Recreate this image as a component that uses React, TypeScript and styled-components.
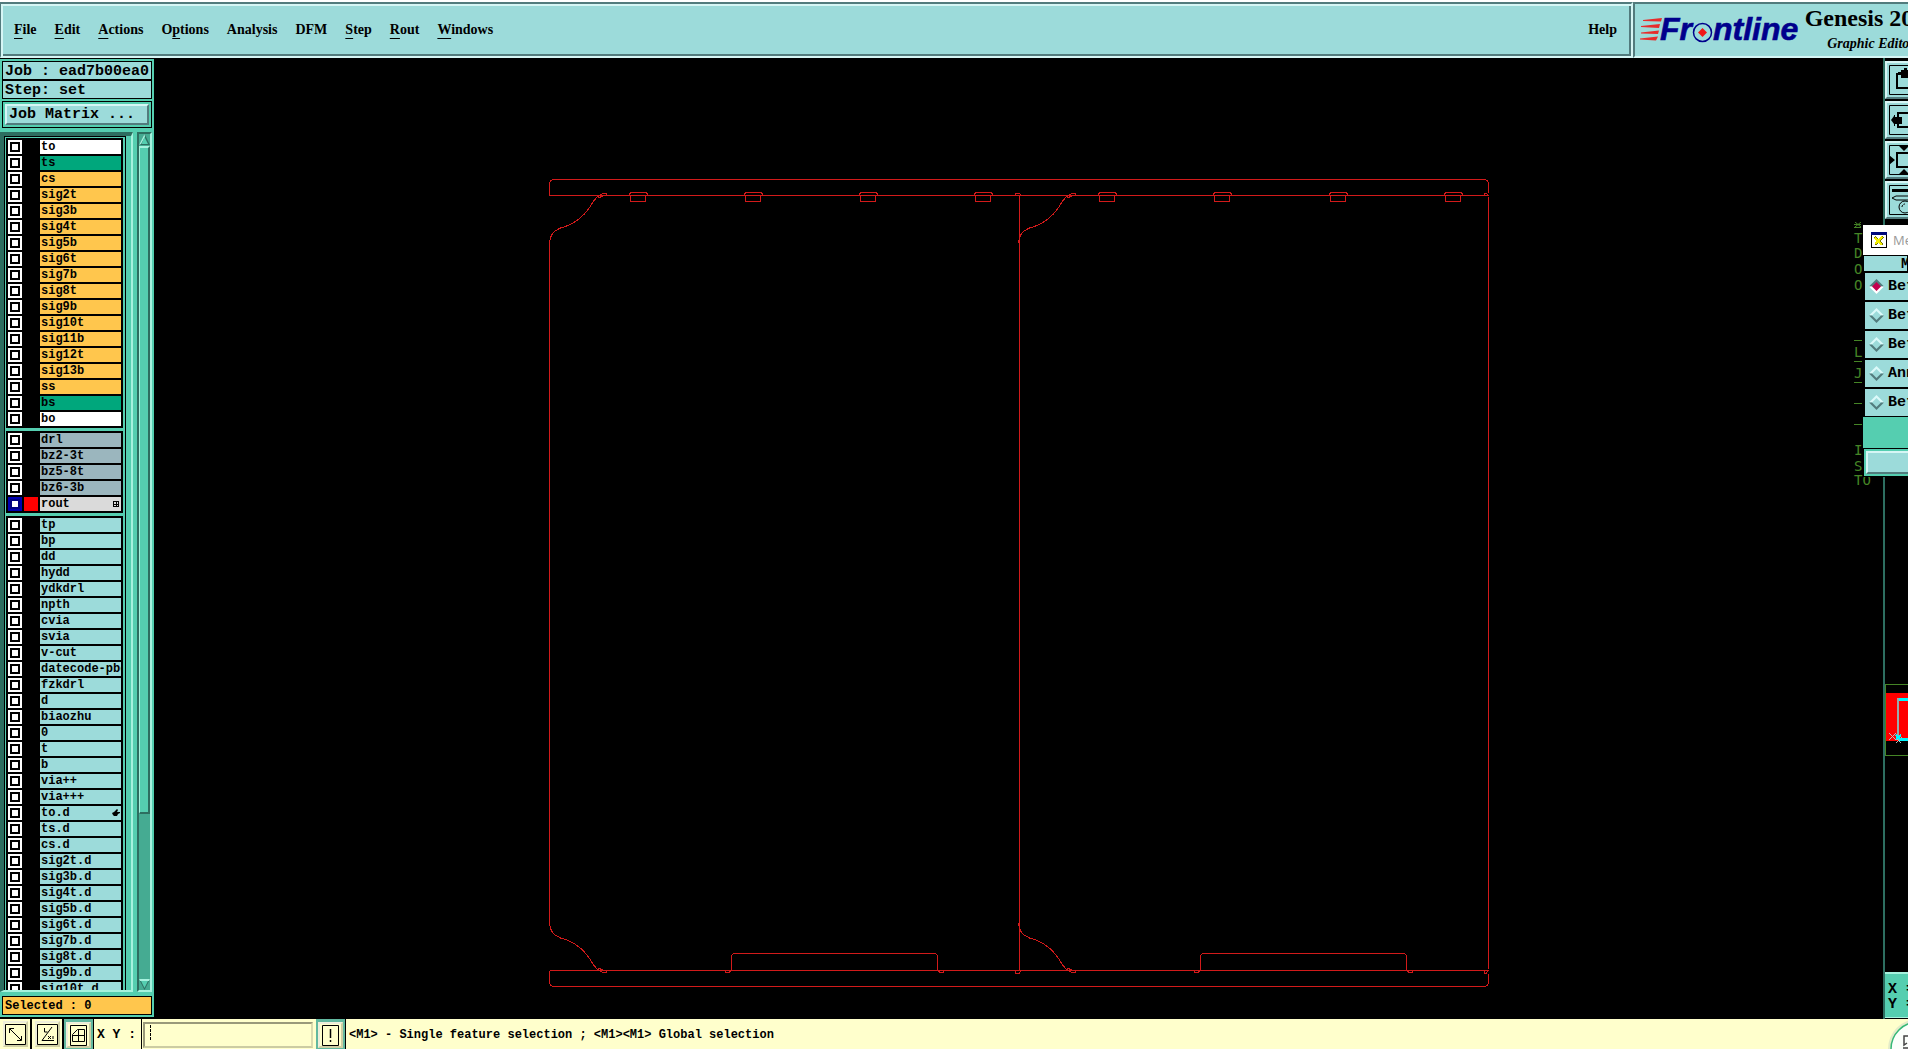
import React from "react";
import styled, { createGlobalStyle } from "styled-components";

const c = {
  face: "#9cdbda",
  faceLight: "#d6f6f5",
  faceDark: "#527b7d",
  sea: "#55ceb0",
  seaLight: "#a6f2de",
  seaDark: "#2d6e60",
  trough: "#45ab92",
  amber: "#ffc64d",
  cream: "#ffffcc",
  creamDark: "#99997a",
  board: "#d21a1a",
  silk: "#458526",
};

const mono = `"Liberation Mono", "Courier New", monospace`;
const serif = `"Liberation Serif", "Times New Roman", serif`;

const GlobalStyle = createGlobalStyle`
  * { box-sizing: border-box; }
  html, body, #root { height: 100%; }
  body { margin: 0; background: #000; color: #000; overflow: hidden; font: bold 12px/14px ${mono}; }
  button, input { font: inherit; color: inherit; margin: 0; }
`;

const Page = styled.div`
  display: flex;
  flex-direction: column;
  height: 100vh;
  overflow: hidden;
`;

/* ---------- header ---------- */

const Header = styled.header`
  display: flex;
  height: 58px;
  flex: none;
  border-top: 2px solid #fff;
`;

const MenuBar = styled.nav`
  flex: 1;
  display: flex;
  align-items: center;
  gap: 18px;
  padding: 0 14px 1px 13px;
  background: ${c.face};
  border: 2px solid ${c.faceDark};
  border-left-width: 1px;
  border-right: 2px solid ${c.faceLight};
  border-bottom-color: ${c.faceLight};
  box-shadow: inset 2px 2px ${c.faceLight}, inset -2px -2px ${c.faceDark};
`;

const MenuItem = styled.button`
  padding: 0;
  border: 0;
  background: none;
  font: bold 14px/18px ${serif};
  u { text-underline-offset: 4px; text-decoration-thickness: 1px; text-decoration-skip-ink: none; }
  &:last-child { margin-left: auto; }
`;

const Brand = styled.div`
  flex: none;
  width: 275px;
  display: flex;
  overflow: hidden;
  background: ${c.face};
  border: 2px solid ${c.faceDark};
  border-right: 0;
  border-bottom-color: ${c.faceLight};
  padding-left: 4px;
`;

const Logo = styled.svg`
  flex: none;
  width: 164px;
  height: 50px;
`;

const Product = styled.div`
  flex: none;
  width: 136px;
  text-align: center;
  white-space: nowrap;
  font-family: ${serif};
`;

const ProductName = styled.div`
  font-size: 24px;
  line-height: 28px;
`;

const ProductMode = styled.div`
  font-size: 14px;
  line-height: 24px;
  font-style: italic;
`;

/* ---------- sidebar ---------- */

const Workspace = styled.div`
  position: relative;
  flex: 1;
  min-height: 0;
  display: flex;
`;

const Sidebar = styled.aside`
  flex: none;
  width: 154px;
  display: flex;
  flex-direction: column;
  background: ${c.sea};
  padding: 2px 0;
  margin: 1px 0 2px;
`;

const InfoBox = styled.div<{ $tone?: string }>`
  flex: none;
  height: 19px;
  margin: 0 2px;
  padding-left: 2px;
  border: 1px solid #000;
  background: ${(p) => p.$tone ?? c.face};
  font-size: 15px;
  line-height: 19px;
  white-space: pre;
  overflow: hidden;
`;

const Selected = styled(InfoBox)`
  font-size: 12px;
  line-height: 18px;
`;

const ButtonWell = styled.div`
  flex: none;
  margin: 2px 2px 4px;
  border: 1px solid #000;
  padding: 2px;
`;

const MatrixButton = styled.button`
  display: block;
  width: 100%;
  height: 21px;
  padding: 0 2px;
  text-align: left;
  background: ${c.face};
  border: 2px solid;
  border-color: ${c.faceLight} ${c.faceDark} ${c.faceDark} ${c.faceLight};
  font-size: 15px;
  line-height: 17px;
`;

const ListArea = styled.div`
  flex: 1;
  min-height: 0;
  display: flex;
  margin-bottom: 4px;
`;

const ListBevel = styled.div`
  flex: 1;
  display: flex;
  border: 2px solid;
  border-width: 4px 2px 2px 4px;
  border-color: ${c.seaDark} ${c.seaLight} ${c.seaLight} ${c.seaDark};
  padding-right: 5px;
`;

const ListViewport = styled.div`
  flex: 1;
  overflow: hidden;
  display: flex;
  flex-direction: column;
  gap: 3px;
  padding: 1px 2px 0 1px;
  border: 1px solid #000;
  border-bottom: 0;
`;

const LayerGroup = styled.ul`
  flex: none;
  margin: 0;
  padding: 2px 2px 0;
  list-style: none;
  background: #000;
`;

const LayerRow = styled.label`
  display: grid;
  grid-template-columns: 14px 14px 1fr;
  gap: 2px;
  height: 14px;
  margin-bottom: 2px;
`;

const LayerCheck = styled.input`
  appearance: none;
  width: 14px;
  height: 14px;
  background: #fff;
  border: 2px solid #fff;
  box-shadow: inset 0 0 0 2px #000;
  &:checked { border-color: #0000b0; box-shadow: inset 0 0 0 2px #000080; }
`;

const Swatch = styled.span<{ $on?: boolean }>`
  background: ${(p) => (p.$on ? "#f00" : "#000")};
`;

const LayerName = styled.span<{ $tone: string }>`
  display: flex;
  justify-content: space-between;
  align-items: center;
  overflow: hidden;
  white-space: nowrap;
  padding: 0 0 0 1px;
  background: ${(p) => p.$tone};
  svg { flex: none; width: 8px; height: 8px; margin-right: 1px; }
`;

const ScrollTrack = styled.div`
  flex: none;
  width: 15px;
  margin: 0 2px 0 4px;
  display: flex;
  flex-direction: column;
  background: ${c.trough};
  border: 2px solid;
  border-color: ${c.seaDark} ${c.seaLight} ${c.seaLight} ${c.seaDark};
`;

const ScrollButton = styled.button`
  flex: none;
  padding: 0;
  border: 0;
  height: 12px;
  background: none;
  &:last-child { margin-top: auto; }
  svg { display: block; width: 11px; height: 12px; }
`;

const ScrollThumb = styled.div`
  flex: 0 1 78%;
  background: ${c.sea};
  border: 2px solid;
  border-width: 2px 2px 2px 1px;
  border-color: ${c.seaLight} ${c.seaDark} ${c.seaDark} ${c.seaLight};
`;

/* ---------- canvas ---------- */

const Canvas = styled.main`
  flex: 1;
  min-width: 0;
  overflow: hidden;
  svg { display: block; width: 100%; height: 100%; }
`;

const SilkNotes = styled.svg`
  position: absolute;
  top: 164px;
  right: 31px;
  width: 24px;
  height: 264px;
`;

/* ---------- right column ---------- */

const ToolColumn = styled.aside`
  flex: none;
  width: 25px;
  display: flex;
  flex-direction: column;
  overflow: hidden;
  border-left: 2px solid ${c.seaDark};
  padding-top: 3px;
`;

const ToolButton = styled.button`
  flex: none;
  width: 40px;
  height: 38px;
  margin-bottom: 2px;
  padding: 2px;
  background: ${c.face};
  border: 2px solid;
  border-color: ${c.faceLight} ${c.faceDark} ${c.faceDark} ${c.faceLight};
  svg { display: block; width: 32px; height: 30px; }
`;

const Overview = styled.svg`
  flex: none;
  width: 60px;
  height: 72px;
  margin-top: auto;
`;

const Readout = styled.div`
  flex: none;
  height: 46px;
  margin: 216px 0 1px;
  padding: 8px 3px;
  background: ${c.sea};
  border-top: 2px solid ${c.seaLight};
  border-bottom: 1px solid ${c.seaLight};
  font-size: 15px;
  line-height: 15px;
  white-space: pre;
`;

/* ---------- popup ---------- */

const Popup = styled.section`
  position: absolute;
  top: 167px;
  right: 0;
  width: 45px;
  overflow: hidden;
  white-space: nowrap;
  background: ${c.sea};
  font-size: 15px;
`;

const PopupTitle = styled.div`
  display: flex;
  align-items: center;
  gap: 6px;
  height: 30px;
  padding-left: 8px;
  background: #fff;
  color: #999;
  font: 13px/20px "Open Sans", sans-serif;
  svg { flex: none; width: 16px; height: 16px; }
`;

const PopupHead = styled.div`
  height: 17px;
  padding-left: 37px;
  line-height: 17px;
  background: ${c.face};
  border: 1px solid #000;
`;

const ModeRow = styled.label`
  display: flex;
  align-items: center;
  gap: 4px;
  height: 29px;
  padding-left: 4px;
  background: ${c.face};
  border: 1px solid #000;
  border-width: 1px 0 1px 2px;
  svg { flex: none; width: 15px; height: 15px; }
`;

const HiddenRadio = styled.input`
  appearance: none;
  position: absolute;
  width: 0;
  height: 0;
`;

const PopupFooter = styled.div`
  margin-top: 31px;
  border: 1px solid #000;
  border-right: 0;
  padding: 2px 0 2px 2px;
`;

const CloseButton = styled.button`
  display: block;
  width: 100px;
  height: 23px;
  background: ${c.face};
  border: 2px solid;
  border-color: ${c.faceLight} ${c.faceDark} ${c.faceDark} ${c.faceLight};
`;

/* ---------- status bar ---------- */

const StatusBar = styled.footer`
  position: relative;
  flex: none;
  height: 30px;
  display: flex;
  overflow: hidden;
  background: ${c.cream};
`;

const StatusCell = styled.div<{ $green?: boolean }>`
  flex: none;
  width: ${(p) => (p.$green ? 30 : 32)}px;
  padding: ${(p) => (p.$green ? "3px 2px" : "2px 2px 2px 3px")};
  background: ${(p) => (p.$green ? "#62b89f" : c.cream)};
  border-right: ${(p) => (p.$green ? "1px" : "2px")} solid #000;
`;

const StatusButton = styled.button`
  display: flex;
  align-items: center;
  justify-content: center;
  width: 100%;
  height: 26px;
  padding: 0;
  background: ${c.cream};
  border: 2px solid;
  border-color: #eeeeda #cfcfa4 #cfcfa4 #eeeeda;
  svg { display: block; flex: none; width: 21px; height: 21px; }
`;

const XyLabel = styled.label`
  flex: none;
  width: 48px;
  padding-left: 3px;
  font-size: 13px;
  line-height: 32px;
  border-right: 1px solid #000;
  white-space: pre;
`;

const XyInput = styled.input`
  flex: none;
  width: 170px;
  height: 26px;
  margin: 3px 3px 0 1px;
  padding: 0 5px;
  background: ${c.cream};
  border: 2px solid;
  border-color: ${c.creamDark} #dcdcb0 #cccca3 ${c.creamDark};
  border-radius: 0;
  outline: 0;
`;

const XyField = styled.div`
  position: relative;
  display: flex;
  &::after {
    content: "";
    position: absolute;
    left: 8px;
    top: 6px;
    height: 15px;
    border-left: 1px dashed #000;
  }
`;

const Message = styled.p`
  margin: 0;
  padding-left: 3px;
  line-height: 32px;
  white-space: pre;
`;

const Bubble = styled.svg`
  position: absolute;
  right: 0;
  bottom: 0;
  width: 24px;
  height: 30px;
`;

/* ---------- data ---------- */

type Layer = { name: string; tone: string; mark?: "grid" | "hand"; active?: boolean };

const paint = (tone: string, names: string): Layer[] => names.split(" ").map((name) => ({ name, tone }));

const groups: Layer[][] = [
  [
    ...paint("#fff", "to"),
    ...paint("#00a77c", "ts"),
    ...paint(c.amber, "cs sig2t sig3b sig4t sig5b sig6t sig7b sig8t sig9b sig10t sig11b sig12t sig13b ss"),
    ...paint("#00a77c", "bs"),
    ...paint("#fff", "bo"),
  ],
  [
    ...paint("#9bb6be", "drl bz2-3t bz5-8t bz6-3b"),
    { name: "rout", tone: "#dadada", mark: "grid", active: true },
  ],
  [
    ...paint(c.face, "tp bp dd hydd ydkdrl npth cvia svia v-cut datecode-pbc fzkdrl d biaozhu 0 t b via++ via+++"),
    { name: "to.d", tone: c.face, mark: "hand" },
    ...paint(c.face, "ts.d cs.d sig2t.d sig3b.d sig4t.d sig5b.d sig6t.d sig7b.d sig8t.d sig9b.d sig10t.d"),
  ],
];

const menus: [string, string, string][] = [
  ["", "F", "ile"],
  ["", "E", "dit"],
  ["", "A", "ctions"],
  ["O", "p", "tions"],
  ["Analysis", "", ""],
  ["DFM", "", ""],
  ["", "S", "tep"],
  ["", "R", "out"],
  ["", "W", "indows"],
];

const silkLines: [string, number][] = [
  ["T", 21],
  ["D", 36],
  ["O", 52],
  ["O", 68],
  ["L", 135],
  ["J", 156],
  ["I", 233],
  ["S", 249],
  ["TO", 263],
];

const modes = ["Between Points", "Between Features", "Between Nets", "Annular Ring", "Between Layers"];

/* ---------- drawings ---------- */

const GridMark = () => (
  <svg viewBox="0 0 8 8" shapeRendering="crispEdges">
    <path d="M1.5 1.5h5v5h-5zM4 1v6M1 4h6" fill="none" stroke="#000" />
  </svg>
);

const HandMark = () => (
  <svg viewBox="0 0 8 8">
    <path d="M0 4L2 3L5 0L6 1L5 3L8 3V4L6 5L5 7H2L1 6Z" />
  </svg>
);

const CornerProfile = ({ x }: { x: number }) => (
  <g transform={`translate(${x} 0)`}>
    <path d="M0 243C1 234 4 231 11 228C23 225 34 217 41 206C46 197 50 193.500 55 193.500H57V195.500H54Q51 197 49 198" />
    <path d="M0 923C1 932 4 935 11 938C23 941 34 949 41 960C46 969 50 972.500 55 972.500H57V970.500H54Q51 969 49 968" />
  </g>
);

const Socket = ({ x }: { x: number }) => (
  <path d={`M${x} 195.500v-2h1v-1h16v1h1v2h-2v6h-15v-6z`} />
);

const Foot = ({ x }: { x: number }) => (
  <path
    d={`M${x} 970.500v2h3q3-1 3-4v-11q0-4 3-4h200q3 0 3 4v11q0 3 3 4h3v-2`}
  />
);

const Board = () => (
  <svg viewBox="154 58 1729 961" preserveAspectRatio="xMidYMid meet" fill="none" stroke={c.board} shapeRendering="crispEdges">
    <path d="M549.500 195.500V184.500Q549.500 179.500 554.500 179.500H1483.500Q1488.500 179.500 1488.500 184.500V192.500" />
    <path d="M549.500 195.500H1488.500" />
    <path d="M549.500 970.500V981.500Q549.500 986.500 554.500 986.500H1483.500Q1488.500 986.500 1488.500 981.500V973.500" />
    <path d="M549.500 970.500H1488.500" />
    <path d="M549.500 243V923M1019.500 196V970M1488.500 197V969" />
    <path d="M1015.500 195v-2h4l2 3M1015.500 971v2h4l2-3M1484.500 195v-2h2l2 3M1484.500 971v2h2l2-3" />
    <CornerProfile x={549.5} />
    <CornerProfile x={1018.5} />
    {[629.5, 744.5, 859.5, 974.5, 1098.5, 1213.5, 1329.5, 1444.5].map((x) => (
      <Socket key={x} x={x} />
    ))}
    <Foot x={725.5} />
    <Foot x={1194.5} />
  </svg>
);

const Diamond = ({ on }: { on: boolean }) => (
  <svg viewBox="0 0 15 15">
    <path d="M0 7.500L7.500 0L15 7.500Z" fill={on ? c.faceDark : "#dcfafa"} />
    <path d="M0 7.500L7.500 15L15 7.500Z" fill={on ? "#fff" : c.faceDark} />
    <path d="M3 7.500L7.500 3L12 7.500L7.500 12Z" fill={on ? "#c4004e" : c.face} />
  </svg>
);

const toolIcons: { label: string; art: React.ReactNode }[] = [
  {
    label: "Pan up",
    art: (
      <>
        <path d="M8 9h18v14h-18z" fill="none" stroke="#000" strokeWidth="2" />
        <path d="M9 7h3v-2h3v-2h3v2h3v2h3v2h-3v4h-9v-4h-3z" />
      </>
    ),
  },
  {
    label: "Pan left",
    art: (
      <>
        <path d="M9 8h16v14h-16z" fill="none" stroke="#000" strokeWidth="2" />
        <path d="M2 15l3-4v-1h1v2h7v7h-7v2h-1v-2z" />
      </>
    ),
  },
  {
    label: "Zoom to fit",
    art: (
      <>
        <path d="M8 8h14v14h-14z" fill="none" stroke="#000" strokeWidth="2" />
        <path d="M0 10l6 5l-6 5zM10 1h10l-5 5zM10 29h10l-5-5z" />
      </>
    ),
  },
  {
    label: "Zoom tools",
    art: (
      <>
        <path d="M3 4h26v3H3z" />
        <path d="M3 13l4-2h20v4H7z" fill="none" stroke="#000" />
        <circle cx="16" cy="22" r="6" fill="none" stroke="#000" />
        <path d="M13 22a3 3 0 0 1 3-3" fill="none" stroke="#000" strokeDasharray="2 1" />
      </>
    ),
  },
];

export default function App() {
  return (
    <Page>
      <GlobalStyle />
      <Header>
        <MenuBar>
          {menus.map(([before, key, after]) => (
            <MenuItem key={before + key + after}>
              {before}
              {key && <u>{key}</u>}
              {after}
            </MenuItem>
          ))}
          <MenuItem>Help</MenuItem>
        </MenuBar>
        <Brand>
          <Logo viewBox="1639 4 164 50" role="img" aria-label="Frontline">
            <g fill="#f01818">
              <path d="M1643 20L1662 18L1661 21.500L1643 21Z" opacity="0.9" />
              <path d="M1641 26L1660 24L1659 28L1641 27Z" opacity="0.9" />
              <path d="M1641 32.500L1659 30.500L1658 34L1641 33.500Z" opacity="0.9" />
              <path d="M1640 38.500L1658 36.500L1656 40.500L1640 39.500Z" opacity="0.9" />
              <path d="M1702.500 28l4.500 4.500l-4.500 4.500l-4.500-4.500z" />
            </g>
            <g
              fill="#00008c"
              stroke="#00008c"
              strokeWidth="0.6"
              fontFamily="Liberation Sans, Arial, sans-serif"
              fontWeight="bold"
              fontStyle="italic"
              fontSize="32"
            >
              <text x="1660" y="40">Fr</text>
              <text x="1713" y="40">ntline</text>
            </g>
            <circle cx="1702.500" cy="32.500" r="9" fill="none" stroke="#00008c" strokeWidth="1.500" />
          </Logo>
          <Product>
            <ProductName>Genesis 2000</ProductName>
            <ProductMode>Graphic Editor</ProductMode>
          </Product>
        </Brand>
      </Header>

      <Workspace>
        <Sidebar>
          <InfoBox>Job : ead7b00ea0</InfoBox>
          <InfoBox>Step: set</InfoBox>
          <ButtonWell>
            <MatrixButton>Job Matrix ...</MatrixButton>
          </ButtonWell>
          <ListArea>
            <ListBevel>
              <ListViewport>
                {groups.map((layers, i) => (
                  <LayerGroup key={i}>
                    {layers.map((l) => (
                      <li key={l.name}>
                        <LayerRow>
                          <LayerCheck type="checkbox" defaultChecked={l.active} />
                          <Swatch $on={l.active} />
                          <LayerName $tone={l.tone}>
                            {l.name}
                            {l.mark === "grid" && <GridMark />}
                            {l.mark === "hand" && <HandMark />}
                          </LayerName>
                        </LayerRow>
                      </li>
                    ))}
                  </LayerGroup>
                ))}
              </ListViewport>
            </ListBevel>
            <ScrollTrack>
              <ScrollButton aria-label="Scroll up">
                <svg viewBox="0 0 11 12">
                  <path d="M5.500 0L11 11H0Z" fill={c.seaDark} />
                  <path d="M5.500 0L0 11L2 10L6 3Z" fill={c.seaLight} />
                  <path d="M5.500 3L9 10H2.500Z" fill={c.sea} />
                </svg>
              </ScrollButton>
              <ScrollThumb />
              <ScrollButton aria-label="Scroll down">
                <svg viewBox="0 0 11 12">
                  <path d="M0 1H11L5.500 12Z" fill={c.seaDark} />
                  <path d="M0 1H11L10 3H1Z" fill={c.seaLight} />
                  <path d="M2 3H9L5.500 10Z" fill={c.sea} />
                </svg>
              </ScrollButton>
            </ScrollTrack>
          </ListArea>
          <Selected $tone={c.amber}>Selected : 0</Selected>
        </Sidebar>

        <Canvas>
          <Board />
        </Canvas>

        <ToolColumn>
          {toolIcons.map((t) => (
            <ToolButton key={t.label} aria-label={t.label}>
              <svg viewBox="0 0 32 30">
                <path d="M0.500 0.500h30v29h-30z" fill="none" stroke="#000" />
                {t.art}
              </svg>
            </ToolButton>
          ))}
          <Overview viewBox="0 0 60 72" shapeRendering="crispEdges">
            <path d="M0 9h60v48H0z" fill="#f00" />
            <path d="M0.500 0.500h59v71h-59z" fill="none" stroke={c.silk} />
            <path d="M13 15h47M13 55h47" stroke="#00f6ff" strokeWidth="3" />
            <path d="M13 14v42" stroke="#9aa" strokeWidth="2" />
            <path d="M4 49l7 7M11 49l-7 7M11 54l5 5M17 53l-6 6" stroke="#bbb" />
            <path d="M11 51l5 5M16 51l-5 4" stroke="#00f6ff" strokeWidth="2" />
          </Overview>
          <Readout>{"X =\nY ="}</Readout>
        </ToolColumn>

        <SilkNotes viewBox="0 0 24 264" aria-hidden="true">
          <g fill={c.silk} fontFamily="DejaVu Sans Mono, monospace" fontSize="14" fontWeight="normal">
            {silkLines.map(([s, y]) => (
              <text key={y} x="1" y={y}>
                {s}
              </text>
            ))}
          </g>
          <path
            d="M1 2.500h7M1 5.500h7M2 0l6 5M8 0l-6 5M1 118.500h8M1 139.500h8M1 160.500h8M1 181.500h8M1 202.500h8"
            fill="none"
            stroke={c.silk}
          />
        </SilkNotes>

        <Popup>
          <PopupTitle>
            <svg viewBox="0 0 16 16" shapeRendering="crispEdges">
              <path d="M0.500 0.500h15v15h-15z" fill="#fff" stroke="#000" />
              <path d="M0 0h16v3H0z" fill="#000a7a" />
              <path d="M4 5l8 8M12 5l-8 8" stroke="#777700" strokeWidth="2" />
              <path d="M4 6l7 7M11 5l-7 7" stroke="#f4ee00" strokeWidth="2" />
            </svg>
            Measure
          </PopupTitle>
          <PopupHead>Mode</PopupHead>
          {modes.map((m, i) => (
            <ModeRow key={m}>
              <HiddenRadio type="radio" name="mode" defaultChecked={i === 0} />
              <Diamond on={i === 0} />
              {m}
            </ModeRow>
          ))}
          <PopupFooter>
            <CloseButton aria-label="Close" />
          </PopupFooter>
        </Popup>
      </Workspace>

      <StatusBar>
        <StatusCell>
          <StatusButton aria-label="Snap to end">
            <svg viewBox="0 0 21 21" fill="none" stroke="#000">
              <path d="M0.500 0.500h20v20h-20zM5 5l11 11M4.500 9v-4.500h4.500M12 16.500h4.500v-4.500" />
            </svg>
          </StatusButton>
        </StatusCell>
        <StatusCell>
          <StatusButton aria-label="Angle lock">
            <svg viewBox="0 0 21 21" fill="none" stroke="#000">
              <path d="M0.500 0.500h20v20h-20zM15 3L5 16.500h12M7.500 4v4h3" />
              <path d="M11 12l3 3M14 12l-3 3M16 12v3" />
            </svg>
          </StatusButton>
        </StatusCell>
        <StatusCell $green>
          <StatusButton aria-label="Grid">
            <svg viewBox="0 0 21 21" fill="none" stroke="#000">
              <path d="M2.500 0.500h16v20h-16zM4.500 16.500v-7l5-5h7v12zM10.500 4v12M4 10.500h12" />
            </svg>
          </StatusButton>
        </StatusCell>
        <XyLabel htmlFor="xy">X Y :</XyLabel>
        <XyField>
          <XyInput id="xy" />
        </XyField>
        <StatusCell $green>
          <StatusButton aria-label="Apply">
            <svg viewBox="0 0 21 21" fill="none" stroke="#000">
              <path d="M2.500 0.500h16v20h-16z" />
              <path d="M10.500 4v9M10.500 15v2" strokeWidth="1.500" />
            </svg>
          </StatusButton>
        </StatusCell>
        <Message>{"<M1> - Single feature selection ; <M1><M1> Global selection"}</Message>
        <Bubble viewBox="0 0 24 30">
          <circle cx="34" cy="30" r="30" fill="#e4ecc8" />
          <circle cx="34" cy="30" r="27" fill="#fbfffb" stroke="#35b878" strokeWidth="1.500" />
          <path d="M24 17h-4v9l3-2M19 29h5" fill="none" stroke="#444" strokeWidth="1.500" />
        </Bubble>
      </StatusBar>
    </Page>
  );
}
